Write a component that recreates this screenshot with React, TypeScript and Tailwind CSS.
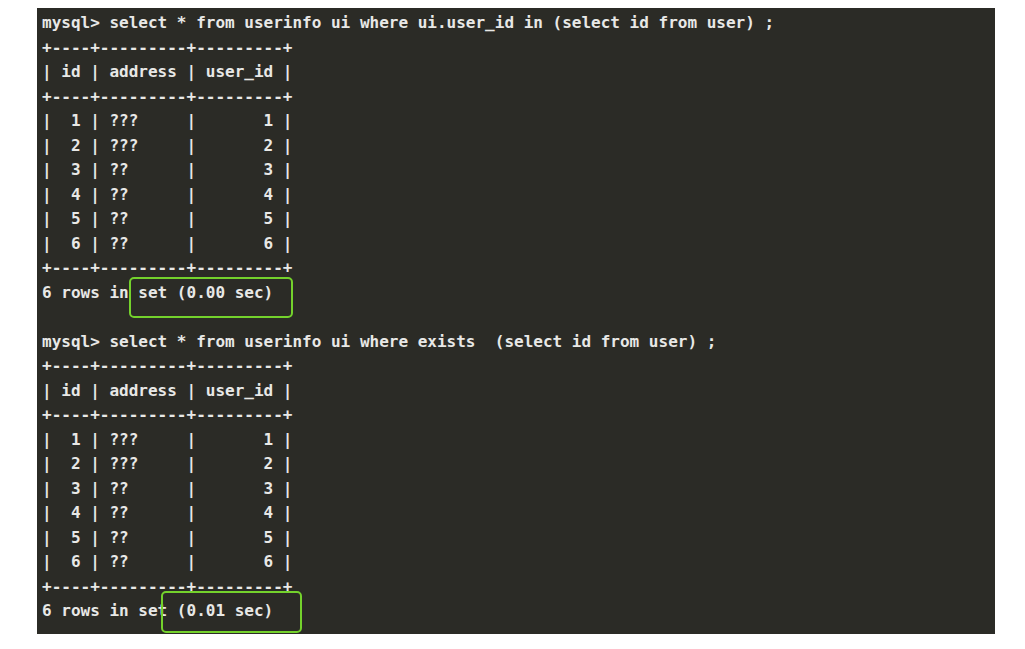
import React from "react";

const border = "+----+---------+---------+";
const header = "| id | address | user_id |";
const rows = [
  "|  1 | ???     |       1 |",
  "|  2 | ???     |       2 |",
  "|  3 | ??      |       3 |",
  "|  4 | ??      |       4 |",
  "|  5 | ??      |       5 |",
  "|  6 | ??      |       6 |",
];

const lines: string[] = [
  "mysql> select * from userinfo ui where ui.user_id in (select id from user) ;",
  border,
  header,
  border,
  ...rows,
  border,
  "6 rows in set (0.00 sec)",
  "",
  "mysql> select * from userinfo ui where exists  (select id from user) ;",
  border,
  header,
  border,
  ...rows,
  border,
  "6 rows in set (0.01 sec)",
];

export default function App() {
  return (
    <div className="w-[1025px] h-[649px] bg-white pt-[8px] pl-[37px]">
      <div className="relative w-[958px] h-[626px] bg-[#2b2b26] pt-[3px] pl-[5px]">
        <pre
          className="m-0 text-[16px] leading-[24.5px] font-bold text-[#e8e8e6] whitespace-pre"
          style={{ fontFamily: '"DejaVu Sans Mono", "Liberation Mono", monospace' }}
        >
          {lines.map((l, i) => (
            <div key={i} className="h-[24.5px]">
              {l === "" ? "\u00a0" : l}
            </div>
          ))}
        </pre>
        <div className="absolute left-[92px] top-[269px] w-[164px] h-[41px] border-[2.5px] border-[#74d22c] rounded-[5px]" />
        <div className="absolute left-[124px] top-[583px] w-[141px] h-[42px] border-[2.5px] border-[#74d22c] rounded-[5px]" />
      </div>
    </div>
  );
}
